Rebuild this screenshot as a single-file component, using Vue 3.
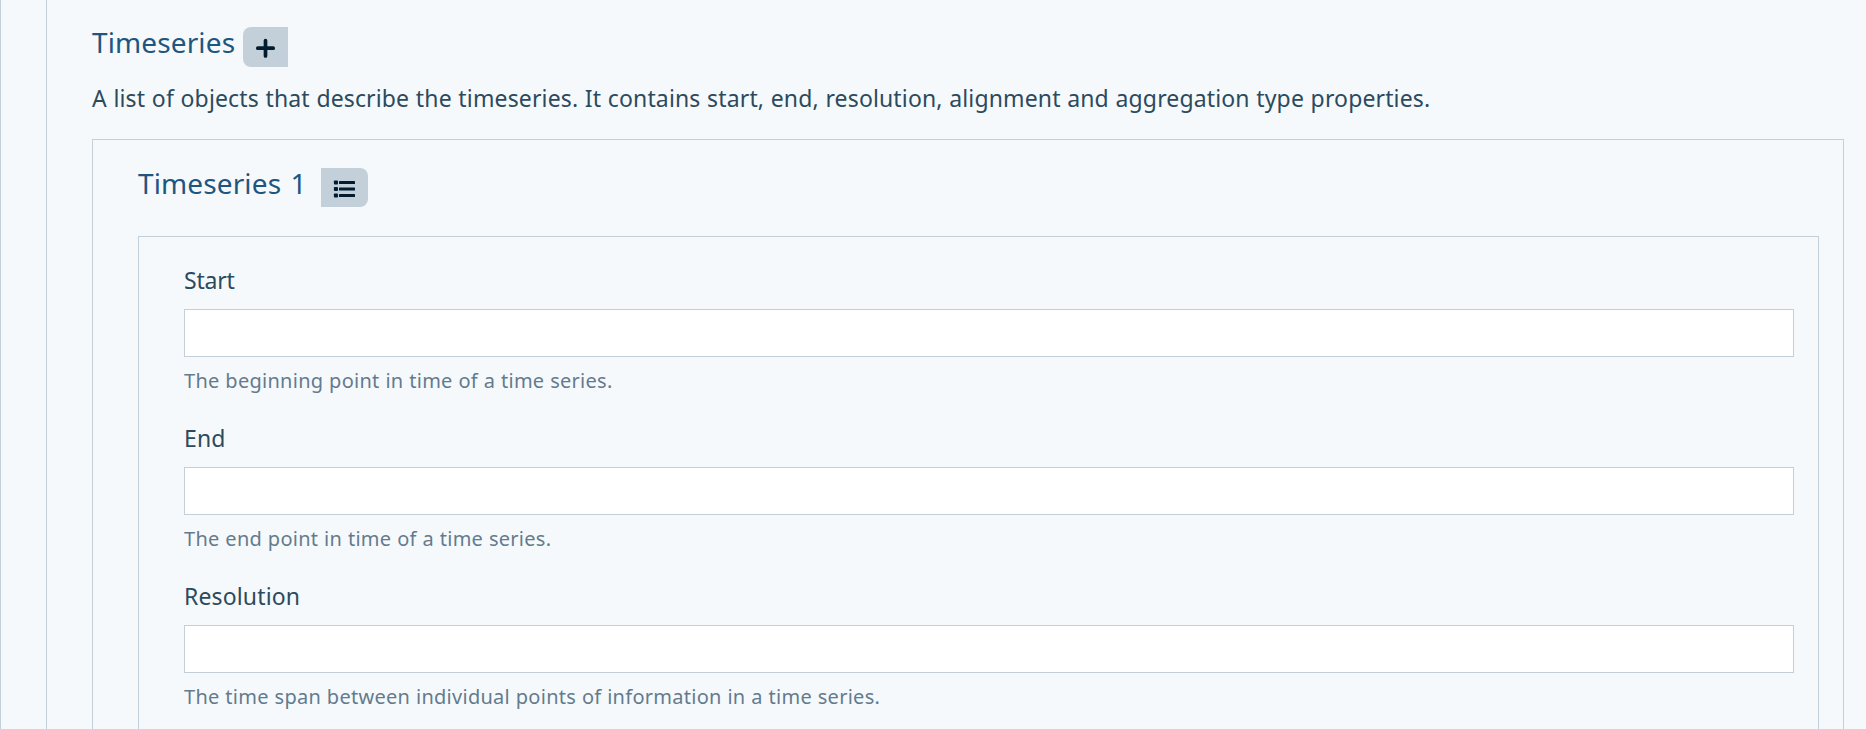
<script setup>
const fields = [
  { id: 'start', label: 'Start', hint: 'The beginning point in time of a time series.' },
  { id: 'end', label: 'End', hint: 'The end point in time of a time series.' },
  { id: 'resolution', label: 'Resolution', hint: 'The time span between individual points of information in a time series.' },
]
</script>

<template>
  <div class="page">
    <div class="level">
      <section class="group">
        <header class="head">
          <h2 class="title first">Timeseries</h2>
          <button class="btn add" type="button" aria-label="Add">
            <svg width="45" height="40" viewBox="0 0 45 40">
              <path d="M22.5 13.5V28.9M14.8 21.2H30.2" stroke="#001c2e" stroke-width="3.7" stroke-linecap="round" />
            </svg>
          </button>
        </header>
        <p class="desc">A list of objects that describe the timeseries. It contains start, end, resolution, alignment and aggregation type properties.</p>
        <div class="box">
          <header class="head">
            <h2 class="title second">Timeseries 1</h2>
            <button class="btn list" type="button" aria-label="List">
              <svg width="47" height="39" viewBox="0 0 47 39" fill="#001c2e">
                <rect x="12.9" y="12.4" width="4.1" height="4.1" rx="0.9" />
                <rect x="12.9" y="18.9" width="4.1" height="4.1" rx="0.9" />
                <rect x="12.9" y="25.4" width="4.1" height="4.1" rx="0.9" />
                <rect x="18" y="13" width="16" height="3" rx="0.6" />
                <rect x="18" y="19.5" width="16" height="3" rx="0.6" />
                <rect x="18" y="26" width="16" height="3" rx="0.6" />
              </svg>
            </button>
          </header>
          <div class="box fields">
            <div v-for="f in fields" :key="f.id" class="field">
              <label :for="f.id" :class="f.id">{{ f.label }}</label>
              <input :id="f.id" type="text" />
              <small>{{ f.hint }}</small>
            </div>
          </div>
        </div>
      </section>
    </div>
  </div>
</template>

<style>
html, body { background: #f5f9fc; overflow: hidden; }
</style>

<style scoped>
.page {
  box-sizing: border-box;
  height: 729px;
  overflow: hidden;
  padding-left: 45px;
  border-left: 1px solid #c3d0da;
  background: #f5f9fc;
  color: #2c4a5e;
  font-family: "Noto Sans", "Open Sans", sans-serif;
}
.level { border-left: 1px solid #c3d0da; padding: 21px 22px 0 45px; }
.head { display: flex; align-items: flex-start; height: 46px; }
.title {
  margin: 0;
  padding-top: 1px;
  font-size: 28px;
  line-height: 40px;
  font-weight: 400;
  letter-spacing: 0.12px;
  word-spacing: 2px;
  color: #1f5680;
  white-space: nowrap;
}
.first { width: 151px; }
.second { width: 183px; }
.btn { margin: 6px 0 0; padding: 0; border: 0; background: #c3d0da; display: block; }
.btn svg { display: block; }
.add { width: 45px; height: 40px; border-radius: 8px 0 0 8px; }
.list { width: 47px; height: 39px; border-radius: 0 8px 8px 0; }
.desc {
  margin: 13px 0 23px;
  font-size: 23px;
  line-height: 36px;
  letter-spacing: 0.14px;
  word-spacing: 0.5px;
  white-space: nowrap;
}
.box { border: 1px solid #c3d0da; padding: 22px 24px 0 45px; height: 700px; }
.fields { margin-top: 28px; padding-top: 25px; }
.field { display: flex; flex-direction: column; margin-bottom: 23px; }
label { font-size: 23px; line-height: 36px; letter-spacing: 0.14px; }
.start { letter-spacing: -0.2px; }
input {
  box-sizing: border-box;
  width: 100%;
  height: 48px;
  margin: 11px 0 7px;
  padding: 0 12px;
  border: 1px solid #c3d0da;
  border-radius: 0;
  background: #fff;
  font: inherit;
  outline: none;
}
small {
  font-size: 20px;
  line-height: 33px;
  letter-spacing: 0.27px;
  word-spacing: 0.3px;
  color: #647b8d;
  white-space: nowrap;
}
</style>
